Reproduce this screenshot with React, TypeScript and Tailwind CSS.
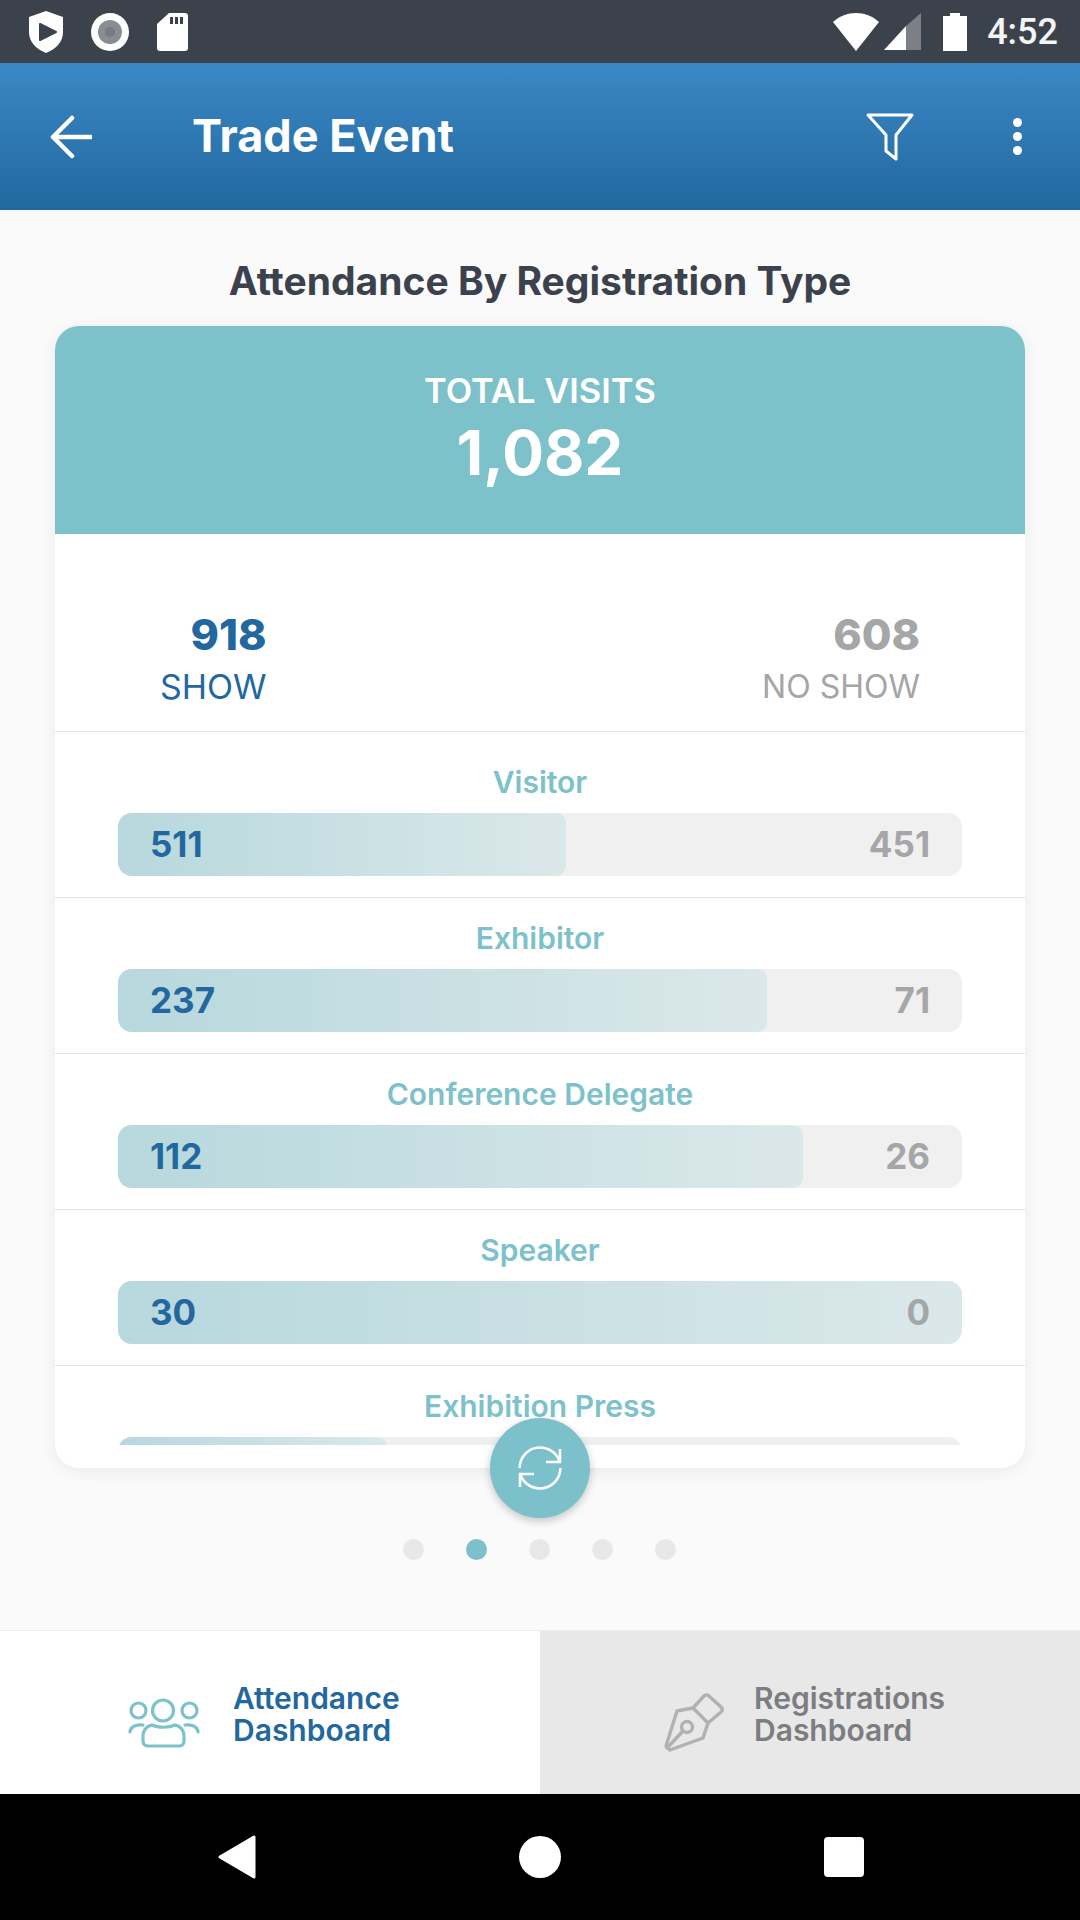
const rows = [
  { label: 'Visitor', show: '511', noShow: '451', fill: 'w-[448px]' },
  { label: 'Exhibitor', show: '237', noShow: '71', fill: 'w-[649px]' },
  { label: 'Conference Delegate', show: '112', noShow: '26', fill: 'w-[685px]' },
  { label: 'Speaker', show: '30', noShow: '0', fill: 'w-[844px]' },
  { label: 'Exhibition Press', show: '', noShow: '', fill: 'w-[269px]' },
];

function StatusBar() {
  return (
    <div className="flex h-[63px] items-center bg-[#3c424b] pl-[29px] pr-[22px]">
      <svg width="34" height="42" viewBox="0 0 34 42" className="mr-[28px]">
        <path d="M17 0 L34 6 V21 C34 31 27 38 17 42 C7 38 0 31 0 21 V6 Z" fill="#fff" />
        <path d="M11 13 L27 21 L11 29 Z" fill="#3c424b" stroke="#3c424b" strokeWidth="2" strokeLinejoin="round" />
      </svg>
      <svg width="38" height="38" viewBox="0 0 38 38" className="mr-[28px]">
        <circle cx="19" cy="19" r="19" fill="#fff" />
        <circle cx="19" cy="19" r="12" fill="#8a8c94" />
        <circle cx="19" cy="19" r="5" fill="#777a83" />
      </svg>
      <svg width="31" height="38" viewBox="0 0 31 38">
        <path d="M12 0 H28 A3 3 0 0 1 31 3 V35 A3 3 0 0 1 28 38 H3 A3 3 0 0 1 0 35 V11 Z" fill="#fff" />
        <rect x="13" y="4" width="3" height="7" fill="#3c424b" />
        <rect x="18" y="4" width="3" height="7" fill="#3c424b" />
        <rect x="23" y="4" width="3" height="7" fill="#3c424b" />
      </svg>
      <svg width="46" height="38" viewBox="0 0 46 38" className="ml-auto mr-[5px]">
        <path d="M0 9 C13 -3 33 -3 46 9 L23 38 Z" fill="#fff" />
      </svg>
      <svg width="37" height="37" viewBox="0 0 37 37" className="mr-[22px]">
        <path d="M37 0 V37 H22 V13 Z" fill="#7d7f86" />
        <path d="M22 13 V37 H0 Z" fill="#fff" />
      </svg>
      <svg width="24" height="38" viewBox="0 0 24 38" className="mr-[20px]">
        <path d="M7 0 H17 V3 H24 V38 H0 V3 H7 Z" fill="#fff" />
      </svg>
      <span className="font-['Roboto',sans-serif] text-[36px] font-medium leading-none text-[#f5f5f5]">4:52</span>
    </div>
  );
}

function AppBar() {
  return (
    <div className="flex h-[147px] items-center bg-gradient-to-b from-[#3a88c6] to-[#22689f] pl-[50px] text-white">
      <svg width="42" height="44" viewBox="0 0 42 44" fill="none" stroke="#fff" strokeWidth="4.5" strokeLinecap="round" strokeLinejoin="round" className="mr-[100px]">
        <path d="M41 22 H3 M22 3 L3 22 L22 41" />
      </svg>
      <span className="mb-[2px] text-[45px] font-bold leading-none">Trade Event</span>
      <svg width="50" height="50" viewBox="0 0 50 50" fill="none" stroke="#fff" strokeWidth="3" strokeLinejoin="round" className="ml-auto mr-[98px]">
        <path d="M3 3 H47 L31 23 V47 L21 39 V23 Z" />
      </svg>
      <div className="mr-[58px] flex flex-col gap-[5px]">
        <div className="h-[9px] w-[9px] rounded-full bg-white" />
        <div className="h-[9px] w-[9px] rounded-full bg-white" />
        <div className="h-[9px] w-[9px] rounded-full bg-white" />
      </div>
    </div>
  );
}

function BreakdownRow({ label, show, noShow, fill }: (typeof rows)[number]) {
  return (
    <div className="h-[156px] border-b border-[#e3e4e6] pt-[23px]">
      <div className="h-[34px] text-center text-[30px] font-semibold leading-[34px] text-[#7dc1ca]">{label}</div>
      <div className="relative mx-[63px] mt-[14px] flex h-[63px] items-center justify-between overflow-hidden rounded-[14px] bg-[#f0f0f0] px-[32px] text-[35px] font-bold">
        <div className={`absolute inset-y-0 left-0 rounded-r-[10px] bg-gradient-to-r from-[#b7d8dd] to-[#dbe8ea] ${fill}`} />
        <span className="relative text-[#22689f]">{show}</span>
        <span className="relative text-[#a5a6a8]">{noShow}</span>
      </div>
    </div>
  );
}

function Card() {
  return (
    <div className="relative mx-[55px] mt-[22px] h-[1142px] rounded-[24px] bg-white shadow-[0_3px_16px_rgba(0,0,0,0.07)]">
      <div className="flex h-[208px] flex-col items-center rounded-t-[24px] bg-[#7dc1ca] pt-[45px] text-white">
        <div className="text-[34.5px] font-semibold leading-[40px]">TOTAL VISITS</div>
        <div className="mt-[5px] text-[62px] font-bold leading-[74px]">1,082</div>
      </div>
      <div className="h-[911px] overflow-hidden">
        <div className="flex h-[198px] justify-between border-b border-[#e3e4e6] pl-[105px] pr-[105px] pt-[73px] text-right">
          <div className="text-[#22689f]">
            <div className="text-[43px] font-extrabold leading-[54px]">918</div>
            <div className="mt-[4px] text-[34px] leading-[44px]">SHOW</div>
          </div>
          <div className="text-[#a5a6a8]">
            <div className="text-[43px] font-extrabold leading-[54px]">608</div>
            <div className="mt-[4px] text-[32px] leading-[44px]">NO SHOW</div>
          </div>
        </div>
        <div className="pt-[10px]">
          {rows.map((row) => (
            <BreakdownRow key={row.label} {...row} />
          ))}
        </div>
      </div>
      {/* refresh button sits over the card edge */}
      <div className="absolute left-[435px] top-[1092px] flex h-[100px] w-[100px] items-center justify-center rounded-full bg-[#7bc0cb] shadow-[0_3px_8px_rgba(0,0,0,0.22)]">
        <svg width="46" height="46" viewBox="0 0 46 46" fill="none" stroke="#fff" strokeWidth="2.6">
          <path d="M43 4 V17 H29" />
          <path d="M3 42 V29 H17" />
          <path d="M42.5 16 C39 7 31 2.5 23 2.5 C12 2.5 3 11 2.5 23" />
          <path d="M3.5 30 C7 39 15 43.5 23 43.5 C34 43.5 43 35 43.5 23" />
        </svg>
      </div>
    </div>
  );
}

function Dots() {
  return (
    <div className="mt-[71px] flex justify-center gap-[42px] pr-[2px]">
      <div className="h-[21px] w-[21px] rounded-full bg-[#e8e8e8]" />
      <div className="h-[21px] w-[21px] rounded-full bg-[#7bc0cb]" />
      <div className="h-[21px] w-[21px] rounded-full bg-[#e8e8e8]" />
      <div className="h-[21px] w-[21px] rounded-full bg-[#e8e8e8]" />
      <div className="h-[21px] w-[21px] rounded-full bg-[#e8e8e8]" />
    </div>
  );
}

function BottomTabs() {
  return (
    <div className="mt-[70px] flex h-[164px] border-t border-[#eeeeee]">
      <div className="flex w-[540px] items-center bg-white pl-[128px]">
        <svg width="72" height="50" viewBox="0 0 72 50" fill="none" stroke="#7dc1ca" strokeWidth="3.2" strokeLinecap="round" className="mr-[33px] mt-[20px]">
          <circle cx="35" cy="12.5" r="10.5" />
          <circle cx="10.5" cy="12.5" r="7.5" />
          <circle cx="61.5" cy="12.5" r="7.5" />
          <path d="M2 34 C2 29 8 26 15 27" />
          <path d="M70 34 C70 29 64 26 57 27" />
          <path d="M24 27 C30 30 41 30 47 27 C53 28 56 33 56 38 V43 C56 46 54 48 51 48 H20 C17 48 15 46 15 43 V38 C15 33 18 28 24 27 Z" />
        </svg>
        <div className="pt-[3px] text-[30px] font-semibold leading-[32px] text-[#22689f]">
          Attendance
          <br />
          Dashboard
        </div>
      </div>
      <div className="flex w-[540px] items-center bg-[#e8e8e8] pl-[124px]">
        <svg width="60" height="60" viewBox="0 0 60 60" fill="none" stroke="#b0b1b3" strokeWidth="3.4" strokeLinejoin="round" strokeLinecap="round" className="mr-[30px] mt-[20px]">
          <path d="M29 15 L40 3 C41 1.5 44 1.5 45 3 L57 14 C58.5 15.5 58.5 17.5 57 19 L44 30 Z" />
          <path d="M29 15 L13 18 L2 53 L6 57 L39 45 L44 30" />
          <circle cx="23" cy="34" r="5.5" />
          <path d="M3 55 L19 38" />
        </svg>
        <div className="pt-[3px] text-[30px] font-semibold leading-[32px] text-[#7b7d80]">
          Registrations
          <br />
          Dashboard
        </div>
      </div>
    </div>
  );
}

function NavBar() {
  return (
    <div className="flex h-[126px] items-center bg-black pl-[218px]">
      <svg width="38" height="44" viewBox="0 0 38 44" className="mr-[263px]">
        <path d="M36 2 V42 L2 22 Z" fill="#fff" stroke="#fff" strokeWidth="3" strokeLinejoin="round" />
      </svg>
      <div className="mr-[263px] h-[42px] w-[42px] rounded-full bg-white" />
      <div className="h-[40px] w-[40px] rounded-[4px] bg-white" />
    </div>
  );
}

export default function App() {
  return (
    <div className="flex h-[1920px] w-[1080px] flex-col overflow-hidden bg-[#fafafa] font-['Inter',sans-serif]">
      <StatusBar />
      <AppBar />
      <h1 className="mt-[48px] text-center text-[39px] font-bold leading-[46px] text-[#3c424d]">
        Attendance By Registration Type
      </h1>
      <Card />
      <Dots />
      <BottomTabs />
      <NavBar />
    </div>
  );
}
